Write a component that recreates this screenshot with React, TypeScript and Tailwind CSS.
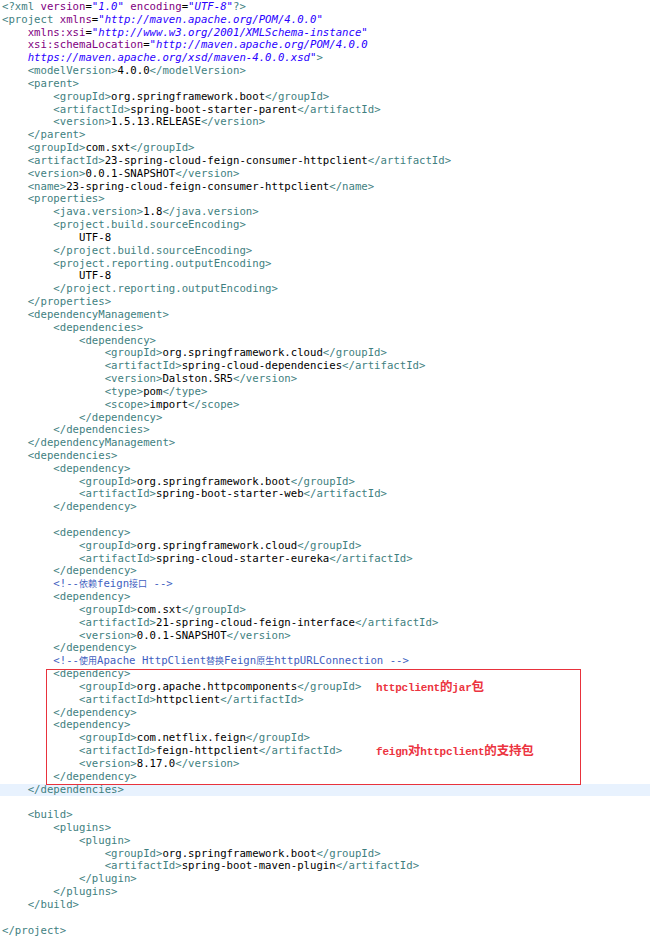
import type { ReactNode } from 'react';

type Tok = [kind: 't' | 'a' | 'v' | 'p', text: string];

const COLORS = {
  t: 'text-[#3f7f7f]',
  a: 'text-[#7f007f]',
  v: 'text-[#2a00ff] italic',
  p: 'text-black',
};

const HEADER: Tok[][] = [
  [['t', '<?xml'], ['p', ' '], ['a', 'version'], ['p', '='], ['v', '"1.0"'], ['p', ' '], ['a', 'encoding'], ['p', '='], ['v', '"UTF-8"'], ['t', '?>']],
  [['t', '<project'], ['p', ' '], ['a', 'xmlns'], ['p', '='], ['v', '"http://maven.apache.org/POM/4.0.0"']],
  [['p', '    '], ['a', 'xmlns:xsi'], ['p', '='], ['v', '"http://www.w3.org/2001/XMLSchema-instance"']],
  [['p', '    '], ['a', 'xsi:schemaLocation'], ['p', '='], ['v', '"http://maven.apache.org/POM/4.0.0']],
  [['p', '    '], ['v', 'https://maven.apache.org/xsd/maven-4.0.0.xsd"'], ['t', '>']],
];

const BEFORE = [
  '    <modelVersion>4.0.0</modelVersion>',
  '    <parent>',
  '        <groupId>org.springframework.boot</groupId>',
  '        <artifactId>spring-boot-starter-parent</artifactId>',
  '        <version>1.5.13.RELEASE</version>',
  '    </parent>',
  '    <groupId>com.sxt</groupId>',
  '    <artifactId>23-spring-cloud-feign-consumer-httpclient</artifactId>',
  '    <version>0.0.1-SNAPSHOT</version>',
  '    <name>23-spring-cloud-feign-consumer-httpclient</name>',
  '    <properties>',
  '        <java.version>1.8</java.version>',
  '        <project.build.sourceEncoding>',
  '            UTF-8',
  '        </project.build.sourceEncoding>',
  '        <project.reporting.outputEncoding>',
  '            UTF-8',
  '        </project.reporting.outputEncoding>',
  '    </properties>',
  '    <dependencyManagement>',
  '        <dependencies>',
  '            <dependency>',
  '                <groupId>org.springframework.cloud</groupId>',
  '                <artifactId>spring-cloud-dependencies</artifactId>',
  '                <version>Dalston.SR5</version>',
  '                <type>pom</type>',
  '                <scope>import</scope>',
  '            </dependency>',
  '        </dependencies>',
  '    </dependencyManagement>',
  '    <dependencies>',
  '        <dependency>',
  '            <groupId>org.springframework.boot</groupId>',
  '            <artifactId>spring-boot-starter-web</artifactId>',
  '        </dependency>',
  '',
  '        <dependency>',
  '            <groupId>org.springframework.cloud</groupId>',
  '            <artifactId>spring-cloud-starter-eureka</artifactId>',
  '        </dependency>',
  '        <!--依赖feign接口 -->',
  '        <dependency>',
  '            <groupId>com.sxt</groupId>',
  '            <artifactId>21-spring-cloud-feign-interface</artifactId>',
  '            <version>0.0.1-SNAPSHOT</version>',
  '        </dependency>',
  '        <!--使用Apache HttpClient替换Feign原生httpURLConnection -->',
];

// lines inside the red box, with the note written to the right of some of them
const BOXED: [string, ReactNode?][] = [
  ['        <dependency>'],
  [
    '            <groupId>org.apache.httpcomponents</groupId>',
    <>
      httpclient<Han>的</Han>jar<Han>包</Han>
    </>,
  ],
  ['            <artifactId>httpclient</artifactId>'],
  ['        </dependency>'],
  ['        <dependency>'],
  ['            <groupId>com.netflix.feign</groupId>'],
  [
    '            <artifactId>feign-httpclient</artifactId>',
    <>
      feign<Han>对</Han>httpclient<Han>的支持包</Han>
    </>,
  ],
  ['            <version>8.17.0</version>'],
  ['        </dependency>'],
];

const AFTER = [
  '    </dependencies>',
  '',
  '    <build>',
  '        <plugins>',
  '            <plugin>',
  '                <groupId>org.springframework.boot</groupId>',
  '                <artifactId>spring-boot-maven-plugin</artifactId>',
  '            </plugin>',
  '        </plugins>',
  '    </build>',
  '',
  '</project>',
];

const CJK = /([\u4e00-\u9fff]+)/;

function Han({ children }: { children: ReactNode }) {
  return <span className="text-[12.5px] [font-family:'Noto_Sans_CJK_SC',sans-serif]">{children}</span>;
}

function renderLine(line: string): ReactNode[] {
  const indent = line.match(/^ */)?.[0] ?? '';
  const rest = line.slice(indent.length);
  const out: ReactNode[] = [indent];
  if (rest.startsWith('<!--')) {
    rest.split(CJK).forEach((part, i) =>
      out.push(
        CJK.test(part) ? (
          <span key={i} className="text-[9px] text-[#3f5fbf] [font-family:'Noto_Sans_CJK_SC',sans-serif]">
            {part}
          </span>
        ) : (
          <span key={i} className="text-[#3f5fbf]">
            {part}
          </span>
        ),
      ),
    );
    return out;
  }
  const parts = rest.match(/<[^>]*>|[^<]+/g) ?? [];
  parts.forEach((part, i) =>
    out.push(
      <span key={i} className={part.startsWith('<') ? COLORS.t : 'text-black'}>
        {part}
      </span>,
    ),
  );
  return out;
}

function Row({ children, note, active }: { children: ReactNode; note?: ReactNode; active?: boolean }) {
  return (
    <div className={`flex h-[12.83px] items-center whitespace-pre pl-[2px] leading-[12.83px] ${active ? 'bg-[#e8f2fe]' : ''}`}>
      <span className="w-[374px] shrink-0">{children}</span>
      {note ? (
        <span className="text-[11px] font-bold tracking-[-0.2px] text-[#ec3440] [font-family:'Liberation_Mono',monospace]">
          {note}
        </span>
      ) : null}
    </div>
  );
}

export default function App() {
  return (
    <div className="flex h-[950px] w-[650px] flex-col overflow-hidden bg-white pt-[1px] text-[10.66px] [font-family:'DejaVu_Sans_Mono',monospace]">
      {HEADER.map((toks, i) => (
        <Row key={`h${i}`}>
          {toks.map(([kind, text], j) => (
            <span key={j} className={COLORS[kind]}>
              {text}
            </span>
          ))}
        </Row>
      ))}
      {BEFORE.map((line, i) => (
        <Row key={`b${i}`}>{renderLine(line)}</Row>
      ))}
      <div className="relative flex flex-col">
        {BOXED.map(([line, note], i) => (
          <Row key={`x${i}`} note={note}>
            {renderLine(line)}
          </Row>
        ))}
        {/* red annotation frame drawn over the code */}
        <div className="pointer-events-none absolute inset-y-[1px] -bottom-[1px] left-[46px] w-[535px] border-[1.5px] border-[#e8323c]" />
      </div>
      {AFTER.map((line, i) => (
        <Row key={`a${i}`} active={i === 0}>
          {renderLine(line)}
        </Row>
      ))}
    </div>
  );
}
